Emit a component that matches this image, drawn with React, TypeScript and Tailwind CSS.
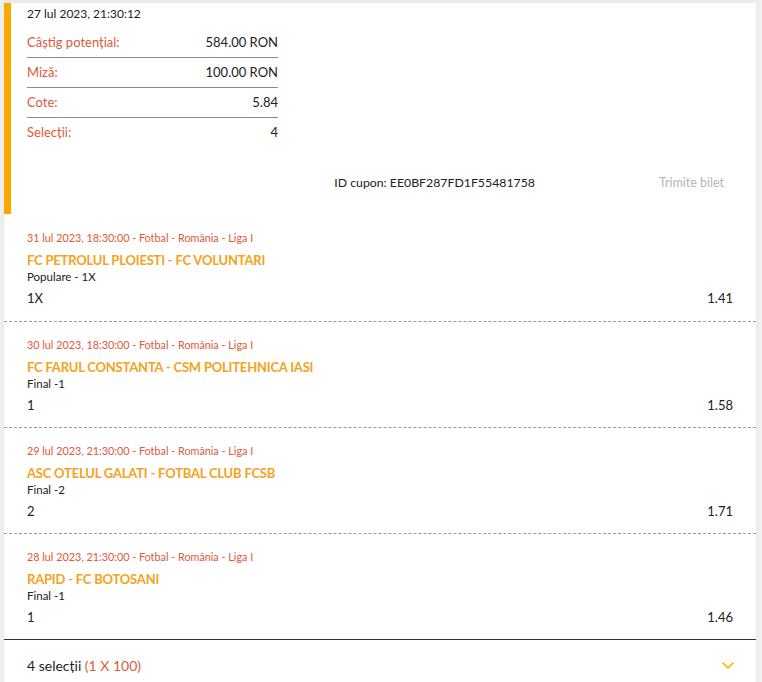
import React from "react";

const rows = [
  { label: "Câștig potențial:", value: "584.00 RON" },
  { label: "Miză:", value: "100.00 RON" },
  { label: "Cote:", value: "5.84" },
  { label: "Selecții:", value: "4" },
];

const matches = [
  { meta: "31 lul 2023, 18:30:00 - Fotbal - România - Liga I", title: "FC PETROLUL PLOIESTI - FC VOLUNTARI", market: "Populare - 1X", pick: "1X", odd: "1.41" },
  { meta: "30 lul 2023, 18:30:00 - Fotbal - România - Liga I", title: "FC FARUL CONSTANTA - CSM POLITEHNICA IASI", market: "Final -1", pick: "1", odd: "1.58" },
  { meta: "29 lul 2023, 21:30:00 - Fotbal - România - Liga I", title: "ASC OTELUL GALATI - FOTBAL CLUB FCSB", market: "Final -2", pick: "2", odd: "1.71" },
  { meta: "28 lul 2023, 21:30:00 - Fotbal - România - Liga I", title: "RAPID - FC BOTOSANI", market: "Final -1", pick: "1", odd: "1.46" },
];

export default function App() {
  return (
    <div
      className="w-[762px] h-[682px] overflow-hidden bg-[#f1f1f1] pl-[4px] pr-[6px] pt-[3px] text-[#222]"
      style={{ fontFamily: "Lato, 'Noto Sans', sans-serif" }}
    >
      <div className="bg-white h-full shadow-[0_-2px_6px_rgba(0,0,0,0.06)]">
        {/* Header */}
        <div className="border-l-[7px] border-[#f9a800] h-[211px] pl-[16px] flex flex-col">
          <div className="text-[12px] leading-[16px] pt-[3px] h-[25px]">27 lul 2023, 21:30:12</div>
          <div className="w-[251px]">
            {rows.map((r, i) => (
              <div
                key={r.label}
                className={`flex justify-between items-center h-[30px] text-[13px] ${i < rows.length - 1 ? "border-b border-[#8a8a8a]" : ""}`}
              >
                <span className="text-[#e1583a]">{r.label}</span>
                <span className="text-[#222]">{r.value}</span>
              </div>
            ))}
          </div>
          <div className="flex justify-end items-center gap-[124px] pr-[32px] mt-[26px] text-[12.3px]">
            <span className="text-[#222]">ID cupon: EE0BF287FD1F55481758</span>
            <span className="text-[#b5b5b5] text-[12.5px]">Trimite bilet</span>
          </div>
        </div>

        {/* Matches */}
        {matches.map((m, i) => (
          <div
            key={m.title}
            className={`pl-[23px] pr-[23px] ${
              i === 0
                ? "h-[108px] pt-[17px] border-b border-dashed border-[#9a9a9a]"
                : i < matches.length - 1
                ? "h-[106px] pt-[16px] border-b border-dashed border-[#9a9a9a]"
                : "h-[106px] pt-[16px] border-b border-[#333]"
            }`}
          >
            <div className="text-[10.8px] leading-[14px] text-[#e1583a]">{m.meta}</div>
            <div className="text-[13px] leading-[18px] font-bold tracking-[-0.2px] text-[#f5a21c] mt-[6px]">{m.title}</div>
            <div className="text-[11.5px] leading-[15px] text-[#222]">{m.market}</div>
            <div className="flex justify-between items-center text-[13px] leading-[18px] mt-[5px]">
              <span>{m.pick}</span>
              <span>{m.odd}</span>
            </div>
          </div>
        ))}

        {/* Footer */}
        <div className="flex justify-between items-center pl-[23px] pr-[21px] h-[50px] text-[14px]">
          <span>
            4 selecții <span className="text-[#e1583a]">(1 X 100)</span>
          </span>
          <svg width="14" height="9" viewBox="0 0 14 9" fill="none">
            <path d="M1.5 1.5 L7 7 L12.5 1.5" stroke="#f5c518" strokeWidth="1.8" />
          </svg>
        </div>
      </div>
    </div>
  );
}
